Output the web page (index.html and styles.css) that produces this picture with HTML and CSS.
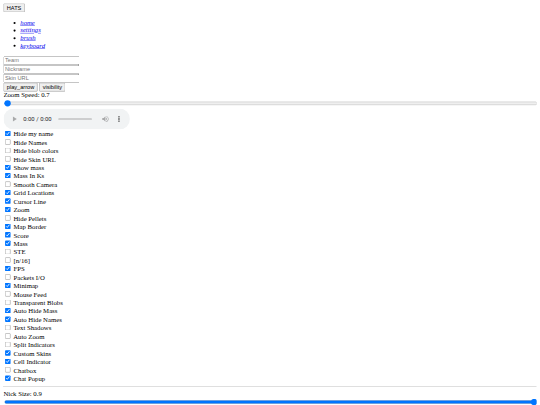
FILE: index.html
```html
<!DOCTYPE html>
<html lang="en">
<head>
    <meta charset="UTF-8">
    <meta name="viewport" content="width=device-width, initial-scale=1.0">
    <title>Options</title>
    <link rel="stylesheet" href="styles.css">
</head>
<body>

    <button>HATS</button>
    <ul>
        <li><a href="#"><i>home</i></a></li>
        <li><a href="#"><i>settings</i></a></li>
        <li><a href="#"><i>brush</i></a></li>
        <li><a href="#"><i>keyboard</i></a></li>
    </ul>

    <input type="text" class="field" placeholder="Team"><br>
    <input type="text" class="field" placeholder="Nickname"><br>
    <input type="text" class="field" placeholder="Skin URL"><br>
    <button>play_arrow</button> <button>visibility</button><br>

    Zoom Speed: 0.7<br>
    <input type="range" class="slider" min="0.7" max="1" step="0.01" value="0.7"><br>
    <audio class="player" controls></audio>

    <input type="checkbox" checked> Hide my name<br>
    <input type="checkbox"> Hide Names<br>
    <input type="checkbox"> Hide blob colors<br>
    <input type="checkbox"> Hide Skin URL<br>
    <input type="checkbox" checked> Show mass<br>
    <input type="checkbox" checked> Mass In Ks<br>
    <input type="checkbox"> Smooth Camera<br>
    <input type="checkbox" checked> Grid Locations<br>
    <input type="checkbox" checked> Cursor Line<br>
    <input type="checkbox" checked> Zoom<br>
    <input type="checkbox"> Hide Pellets<br>
    <input type="checkbox" checked> Map Border<br>
    <input type="checkbox" checked> Score<br>
    <input type="checkbox" checked> Mass<br>
    <input type="checkbox"> STE<br>
    <input type="checkbox"> [n/16]<br>
    <input type="checkbox" checked> FPS<br>
    <input type="checkbox"> Packets I/O<br>
    <input type="checkbox" checked> Minimap<br>
    <input type="checkbox"> Mouse Feed<br>
    <input type="checkbox"> Transparent Blobs<br>
    <input type="checkbox" checked> Auto Hide Mass<br>
    <input type="checkbox" checked> Auto Hide Names<br>
    <input type="checkbox"> Text Shadows<br>
    <input type="checkbox"> Auto Zoom<br>
    <input type="checkbox"> Split Indicators<br>
    <input type="checkbox" checked> Custom Skins<br>
    <input type="checkbox" checked> Cell Indicator<br>
    <input type="checkbox"> Chatbox<br>
    <input type="checkbox" checked> Chat Popup<br>
    <hr>
    Nick Size: 0.9<br>
    <input type="range" class="slider" min="0.5" max="0.9" step="0.01" value="0.9">

</body>
</html>
```

FILE: styles.css
```css
/* page is laid out at 1280px and shrunk to fit the 540px window */
html {
    width: 1280px;
    transform: scale(0.421875);
    transform-origin: 0 0;
}
body {
    font-family: "Liberation Serif", "Times New Roman", serif;
}
button, input {
    font-family: "Liberation Sans", Arial, sans-serif;
}
.field {
    width: 172px;
}
.slider {
    width: 100%;
}
.player {
    display: block;
    height: 50px;
}
```
